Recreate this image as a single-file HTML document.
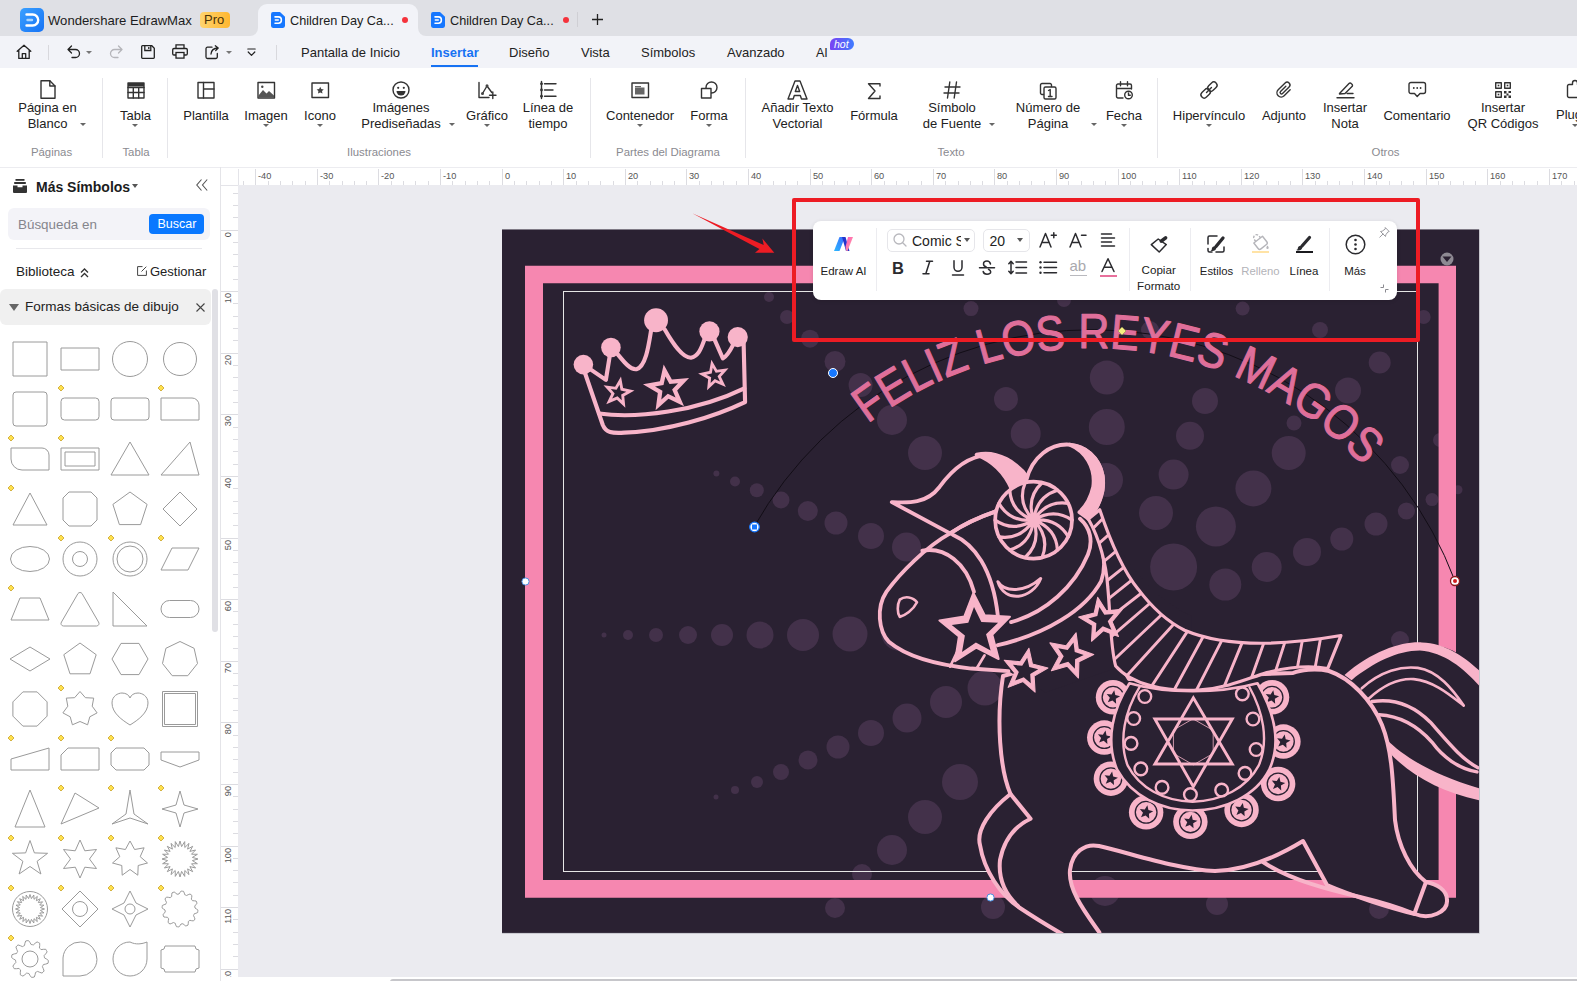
<!DOCTYPE html>
<html>
<head>
<meta charset="utf-8">
<title>EdrawMax</title>
<style>
*{box-sizing:border-box;margin:0;padding:0}
html,body{width:1577px;height:981px;overflow:hidden;background:#ebebf0;font-family:"Liberation Sans",sans-serif;color:#1f1f24;font-size:13px}
.abs{position:absolute}
#titlebar{position:absolute;left:0;top:0;width:1577px;height:36px;background:#dfe0e5}
#menubar{position:absolute;left:0;top:36px;width:1577px;height:32px;background:#f2f3f8}
#ribbon{position:absolute;left:0;top:68px;width:1577px;height:99px;background:#fff}
#left{position:absolute;z-index:2;left:0;top:167px;width:221px;height:814px;background:#fff;border-right:1px solid #e4e4e8;box-shadow:inset 0 1px 0 #ececf0}
#hruler{position:absolute;left:220px;top:167px;width:1357px;height:18px;background:#fff;border-top:1px solid #ececf0}
#vruler{position:absolute;left:220px;top:185px;width:18px;height:796px;background:#fff}
#canvas{position:absolute;left:238px;top:185px;width:1339px;height:796px;background:#ebebf0}
.t{position:absolute;white-space:nowrap;line-height:16px}
.c{transform:translateX(-50%);text-align:center}
.ico{position:absolute;overflow:visible}
svg{overflow:visible}
.sep{position:absolute;width:1px;background:#e6e6ea}
.glab{position:absolute;white-space:nowrap;color:#8a8a90;font-size:11.400px;line-height:14px;transform:translateX(-50%)}
.rl{position:absolute;white-space:nowrap;font-size:13px;line-height:16px;transform:translateX(-50%);text-align:center;color:#222}
.dd{position:absolute;width:0;height:0;border-left:3.5px solid transparent;border-right:3.5px solid transparent;border-top:4px solid #555}
</style>
</head>
<body>
<!--TITLEBAR-->
<div id="titlebar">
<svg class="ico" style="left:20px;top:8px" width="24" height="24" viewBox="0 0 24 24"><defs><linearGradient id="lg1" x1="0" y1="0" x2="1" y2="1"><stop offset="0" stop-color="#3aa0ff"/><stop offset="1" stop-color="#1673f5"/></linearGradient></defs><rect x="0" y="0" width="24" height="24" rx="5" fill="url(#lg1)"/><path d="M6.5 6.5h6.2a5.5 5.5 0 0 1 0 11H6.5" fill="none" stroke="#fff" stroke-width="2.4" stroke-linecap="round"/><path d="M7.500 12h4.500" stroke="#a9d5ff" stroke-width="2.400" stroke-linecap="round"/></svg>
<div class="t" style="left:48px;top:13px;font-size:13.1px;color:#1c1c20">Wondershare EdrawMax</div>
<div class="abs" style="left:200px;top:12px;width:30px;height:16px;border-radius:4px;background:linear-gradient(90deg,#ffd46e,#ffb730)"></div>
<div class="t" style="left:204px;top:12px;font-size:13px;color:#4a3208">Pro</div>
<div class="abs" style="left:258px;top:4px;width:160px;height:32px;background:#f2f3f8;border-radius:9px 9px 0 0"></div>
<svg class="ico" style="left:250px;top:28px" width="8" height="8"><path d="M8 0v8H0a8 8 0 0 0 8-8z" fill="#f2f3f8"/></svg>
<svg class="ico" style="left:418px;top:28px" width="8" height="8"><path d="M0 0v8h8a8 8 0 0 1-8-8z" fill="#f2f3f8"/></svg>
<svg class="ico" style="left:271px;top:12px" width="14" height="16" viewBox="0 0 14 15" preserveAspectRatio="none"><path d="M0 2a2 2 0 0 1 2-2h7l5 4.5V13a2 2 0 0 1-2 2H2a2 2 0 0 1-2-2z" fill="#1677ff"/><path d="M4 4.6h3.4a3 3 0 0 1 0 6H4" fill="none" stroke="#fff" stroke-width="1.5" stroke-linecap="round"/><path d="M4.3 7.6h3" stroke="#fff" stroke-width="1.4" stroke-linecap="round"/></svg>
<div class="t" style="left:290px;top:13px;font-size:12.7px;color:#1c1c20">Children Day Ca...</div>
<div class="abs" style="left:402px;top:17px;width:6px;height:6px;border-radius:50%;background:#f5323c"></div>
<svg class="ico" style="left:431px;top:12px" width="14" height="16" viewBox="0 0 14 15" preserveAspectRatio="none"><path d="M0 2a2 2 0 0 1 2-2h7l5 4.5V13a2 2 0 0 1-2 2H2a2 2 0 0 1-2-2z" fill="#1677ff"/><path d="M4 4.6h3.4a3 3 0 0 1 0 6H4" fill="none" stroke="#fff" stroke-width="1.5" stroke-linecap="round"/><path d="M4.3 7.6h3" stroke="#fff" stroke-width="1.4" stroke-linecap="round"/></svg>
<div class="t" style="left:450px;top:13px;font-size:12.7px;color:#1c1c20">Children Day Ca...</div>
<div class="abs" style="left:563px;top:17px;width:6px;height:6px;border-radius:50%;background:#f5323c"></div>
<div class="abs" style="left:577px;top:12px;width:1px;height:15px;background:#cfcfd4"></div>
<svg class="ico" style="left:592px;top:14px" width="11" height="11"><path d="M5.5 0v11M0 5.5h11" stroke="#222" stroke-width="1.3"/></svg>
</div>
<!--MENUBAR-->
<div id="menubar">
<svg class="ico" style="left:16px;top:8px" width="16" height="16" viewBox="0 0 16 16"><path d="M1.2 7.2L8 1.3l6.8 5.9M2.8 6.2v8.2h10.4V6.2M6.3 14.4V9.6h3.4v4.8" fill="none" stroke="#222" stroke-width="1.3" stroke-linejoin="round" stroke-linecap="round"/></svg>
<div class="abs" style="left:48px;top:9px;width:1px;height:15px;background:#d8d8dd"></div>
<svg class="ico" style="left:67px;top:9px" width="14" height="14" viewBox="0 0 14 14"><path d="M4.5 1L1 4.5 4.5 8M1 4.5h7.5a4 4 0 0 1 0 8H5" fill="none" stroke="#222" stroke-width="1.3" stroke-linecap="round" stroke-linejoin="round"/></svg>
<div class="dd" style="left:86px;top:15px;border-top-color:#777;border-width:3px 3px 0 3px"></div>
<svg class="ico" style="left:109px;top:9px" width="14" height="14" viewBox="0 0 14 14"><path d="M9.5 1L13 4.5 9.5 8M13 4.5H5.5a4 4 0 0 0 0 8H9" fill="none" stroke="#b5b5ba" stroke-width="1.3" stroke-linecap="round" stroke-linejoin="round"/></svg>
<svg class="ico" style="left:141px;top:9px" width="14" height="14" viewBox="0 0 14 14"><path d="M1.5.7h9.3l2.5 2.5v9.3a.8.8 0 0 1-.8.8h-11a.8.8 0 0 1-.8-.8V1.5a.8.8 0 0 1 .8-.8z" fill="none" stroke="#222" stroke-width="1.3"/><path d="M3.8.8v4.7h6V.8M7.8 2v2" fill="none" stroke="#222" stroke-width="1.3"/></svg>
<svg class="ico" style="left:172px;top:8px" width="16" height="15" viewBox="0 0 16 15"><path d="M4 4.5V.8h8v3.7M4 11H2a1.3 1.3 0 0 1-1.3-1.3V5.8A1.3 1.3 0 0 1 2 4.5h12a1.3 1.3 0 0 1 1.3 1.3v3.9A1.3 1.3 0 0 1 14 11h-2" fill="none" stroke="#222" stroke-width="1.3"/><rect x="4" y="8.5" width="8" height="5.6" fill="none" stroke="#222" stroke-width="1.3"/></svg>
<svg class="ico" style="left:205px;top:8.500px" width="15" height="15" viewBox="0 0 15 15"><path d="M7 2.2H2.5A1.5 1.5 0 0 0 1 3.7v8.3a1.5 1.5 0 0 0 1.500 1.5h8.3a1.5 1.5 0 0 0 1.5-1.5V8.5" fill="none" stroke="#222" stroke-width="1.3" stroke-linecap="round"/><path d="M6 9c.3-3.5 2.500-5.800 7-6M10.300 .8L13.200 3 10.700 5.600" fill="none" stroke="#222" stroke-width="1.300" stroke-linecap="round" stroke-linejoin="round"/></svg>
<div class="dd" style="left:226px;top:15px;border-top-color:#777;border-width:3px 3px 0 3px"></div>
<svg class="ico" style="left:247px;top:12px" width="9" height="9" viewBox="0 0 9 9"><path d="M.8 1h7.400M1.200 4l3.300 3.400L7.800 4" fill="none" stroke="#222" stroke-width="1.200" stroke-linecap="round" stroke-linejoin="round"/></svg>
<div class="abs" style="left:276px;top:9px;width:1px;height:15px;background:#d8d8dd"></div>
<div class="t" style="left:301px;top:9px;font-size:13px;color:#222">Pantalla de Inicio</div>
<div class="t" style="left:431px;top:9px;font-size:13px;font-weight:700;color:#1672f3">Insertar</div>
<div class="abs" style="left:431px;top:29px;width:47px;height:2px;background:#1672f3"></div>
<div class="t" style="left:509px;top:9px;font-size:13px;color:#222">Diseño</div>
<div class="t" style="left:581px;top:9px;font-size:13px;color:#222">Vista</div>
<div class="t" style="left:641px;top:9px;font-size:13px;color:#222">Símbolos</div>
<div class="t" style="left:727px;top:9px;font-size:13px;color:#222">Avanzado</div>
<div class="t" style="left:816px;top:9px;font-size:12.5px;color:#222">AI</div>
<div class="abs" style="left:830px;top:2px;width:24px;height:12px;border-radius:6px 6px 6px 1px;background:linear-gradient(90deg,#7b42f3,#3f7cff)"></div>
<div class="t" style="left:834px;top:1px;font-size:10.500px;font-style:italic;color:#fff;line-height:14px">hot</div>
</div>
<!--RIBBON-->
<div id="ribbon">
<svg class="ico" style="left:38.5px;top:12px" width="18" height="19" viewBox="0 0 18 19"><path d="M2 .8h8.800L16 6v12.200H2z" fill="none" stroke="#333" stroke-width="1.4" stroke-linejoin="round" stroke-linecap="round" stroke-width="1.600"/><path d="M10.800 .8V6H16" fill="none" stroke="#333" stroke-width="1.4" stroke-linejoin="round" stroke-linecap="round" stroke-width="1.2" fill="none"/></svg>
<div class="rl" style="left:47.5px;top:31.6px">Página en<br>Blanco</div>
<div class="dd" style="left:79.5px;top:55px;border-width:3.500px 3.500px 0 3.500px;border-top-color:#666"></div>
<svg class="ico" style="left:126.5px;top:13px" width="18" height="18" viewBox="0 0 18 18"><rect x="1" y="2" width="16" height="15" fill="none" stroke="#333" stroke-width="1.4" stroke-linejoin="round" stroke-linecap="round" stroke-width="1.6"/><path d="M1 6.500h16M1 11.500h16M6.300 6.500v10.500M11.700 6.500v10.500" fill="none" stroke="#333" stroke-width="1.4" stroke-linejoin="round" stroke-linecap="round" stroke-width="1.500"/><rect x="1" y="2" width="16" height="3.500" fill="#333"/></svg>
<div class="rl" style="left:135.5px;top:39.5px">Tabla</div>
<div class="dd" style="left:132.0px;top:56px;border-width:3.500px 3.500px 0 3.500px;border-top-color:#666"></div>
<svg class="ico" style="left:197.0px;top:13px" width="18" height="18" viewBox="0 0 18 18"><rect x="1" y="1.500" width="16" height="15.500" fill="none" stroke="#333" stroke-width="1.4" stroke-linejoin="round" stroke-linecap="round" stroke-width="1.600"/><path d="M6.500 1.500v15.500M6.500 8h10.500" fill="none" stroke="#333" stroke-width="1.4" stroke-linejoin="round" stroke-linecap="round" stroke-width="1.600"/></svg>
<div class="rl" style="left:206px;top:39.5px">Plantilla</div>
<svg class="ico" style="left:257.0px;top:13px" width="18" height="18" viewBox="0 0 18 18"><rect x="1" y="1.500" width="16.500" height="15.500" fill="none" stroke="#333" stroke-width="1.4" stroke-linejoin="round" stroke-linecap="round" stroke-width="1.500"/><path d="M1.500 14.500l4.500-5.500 3.500 3.500 2.500-2.500 5 4.500v2h-16z" fill="#555"/><circle cx="5.300" cy="5.700" r="1.200" fill="#444"/></svg>
<div class="rl" style="left:266px;top:39.5px">Imagen</div>
<div class="dd" style="left:262.5px;top:56px;border-width:3.500px 3.500px 0 3.500px;border-top-color:#666"></div>
<svg class="ico" style="left:311.0px;top:13px" width="18" height="18" viewBox="0 0 18 18"><rect x="1" y="2" width="16.500" height="14.500" fill="none" stroke="#333" stroke-width="1.4" stroke-linejoin="round" stroke-linecap="round" stroke-width="1.500"/><path d="M9.200 5.800l1.100 2.300 2.500.3-1.800 1.700.500 2.500-2.300-1.200-2.200 1.200.400-2.500-1.800-1.700 2.500-.3z" fill="#444"/></svg>
<div class="rl" style="left:320px;top:39.5px">Icono</div>
<div class="dd" style="left:316.5px;top:56px;border-width:3.500px 3.500px 0 3.500px;border-top-color:#666"></div>
<svg class="ico" style="left:392.0px;top:13px" width="18" height="18" viewBox="0 0 18 18"><circle cx="9" cy="9" r="8" fill="none" stroke="#333" stroke-width="1.4" stroke-linejoin="round" stroke-linecap="round" stroke-width="1.400"/><circle cx="6.200" cy="6.800" r="1.100" fill="#333"/><circle cx="11.800" cy="6.800" r="1.100" fill="#333"/><path d="M4.500 10h9a4.500 4.500 0 0 1-9 0z" fill="#333"/></svg>
<div class="rl" style="left:401px;top:31.6px">Imágenes<br>Prediseñadas</div>
<div class="dd" style="left:448.5px;top:55px;border-width:3.500px 3.500px 0 3.500px;border-top-color:#666"></div>
<svg class="ico" style="left:478.0px;top:13px" width="18" height="18" viewBox="0 0 18 18"><path d="M1 1.500V16.500h10" fill="none" stroke="#333" stroke-width="1.4" stroke-linejoin="round" stroke-linecap="round" stroke-width="1.300" stroke="#555"/><path d="M4.500 12.500L9 5l4.800 6.500" fill="none" stroke="#333" stroke-width="1.4" stroke-linejoin="round" stroke-linecap="round" stroke-width="1.200" stroke="#555"/><circle cx="4.500" cy="12.500" r="1.500" fill="#444"/><circle cx="9" cy="4.800" r="1.500" fill="#444"/><path d="M14.800 11v6.500M11.500 14.200h6.500" fill="none" stroke="#333" stroke-width="1.4" stroke-linejoin="round" stroke-linecap="round" stroke-width="1.600"/></svg>
<div class="rl" style="left:487px;top:39.5px">Gráfico</div>
<div class="dd" style="left:483.5px;top:56px;border-width:3.500px 3.500px 0 3.500px;border-top-color:#666"></div>
<svg class="ico" style="left:539.0px;top:13px" width="18" height="18" viewBox="0 0 18 18"><path d="M2.500 .5v17" fill="none" stroke="#333" stroke-width="1.4" stroke-linejoin="round" stroke-linecap="round" stroke-width="1.300"/><path d="M5.500 2.800h11.500M5.500 9h8.500M5.500 15.200h11.500" fill="none" stroke="#333" stroke-width="1.4" stroke-linejoin="round" stroke-linecap="round" stroke-width="1.600" stroke-linecap="butt"/><circle cx="2.500" cy="2.800" r="1.400" fill="#333"/><circle cx="2.500" cy="9" r="1.400" fill="#333"/><circle cx="2.500" cy="15.200" r="1.400" fill="#333"/></svg>
<div class="rl" style="left:548px;top:31.6px">Línea de<br>tiempo</div>
<svg class="ico" style="left:631.0px;top:13px" width="18" height="18" viewBox="0 0 18 18"><rect x="1" y="2" width="16.500" height="14.500" fill="none" stroke="#333" stroke-width="1.4" stroke-linejoin="round" stroke-linecap="round" stroke-width="1.500"/><rect x="4" y="6.500" width="9.500" height="7" fill="#666"/><rect x="4" y="5" width="6" height="1.200" fill="#666"/></svg>
<div class="rl" style="left:640px;top:39.5px">Contenedor</div>
<div class="dd" style="left:636.5px;top:56px;border-width:3.500px 3.500px 0 3.500px;border-top-color:#666"></div>
<svg class="ico" style="left:700.0px;top:13px" width="18" height="18" viewBox="0 0 18 18"><circle cx="11.500" cy="6.500" r="5.500" fill="none" stroke="#333" stroke-width="1.4" stroke-linejoin="round" stroke-linecap="round" stroke-width="1.500"/><rect x="1.500" y="7.500" width="9.500" height="9.500" fill="#fff"  stroke="#333" stroke-width="1.4" stroke-linejoin="round" stroke-linecap="round" stroke-width="1.500"/></svg>
<div class="rl" style="left:709px;top:39.5px">Forma</div>
<div class="dd" style="left:705.5px;top:56px;border-width:3.500px 3.500px 0 3.500px;border-top-color:#666"></div>
<svg class="ico" style="left:787.0px;top:12px" width="21" height="20" viewBox="0 0 21 20"><path d="M1 19L8 1h5l7 18h-5.500l-1.200-3.500h-6L6.200 19z" fill="none" stroke="#333" stroke-width="1.4" stroke-linejoin="round" stroke-linecap="round" stroke-width="1.400"/><path d="M8.300 11.500l2.200-6 2.200 6z" fill="none" stroke="#333" stroke-width="1.4" stroke-linejoin="round" stroke-linecap="round" stroke-width="1.400"/></svg>
<div class="rl" style="left:797.5px;top:31.6px">Añadir Texto<br>Vectorial</div>
<svg class="ico" style="left:866.0px;top:14px" width="16" height="18" viewBox="0 0 16 18"><path d="M14 4V1.800H2.500L9 9l-6.500 7.500H14V14" fill="none" stroke="#333" stroke-width="1.4" stroke-linejoin="round" stroke-linecap="round" stroke-width="1.700" stroke-linejoin="miter"/></svg>
<div class="rl" style="left:874px;top:39.5px">Fórmula</div>
<svg class="ico" style="left:943.0px;top:13px" width="18" height="18" viewBox="0 0 18 18"><path d="M6.800 1L4.500 17M13.500 1l-2.300 16M2 6h15M1 12h15" fill="none" stroke="#333" stroke-width="1.4" stroke-linejoin="round" stroke-linecap="round" stroke-width="1.700" stroke-linecap="butt"/></svg>
<div class="rl" style="left:952px;top:31.6px">Símbolo<br>de Fuente</div>
<div class="dd" style="left:988.5px;top:55px;border-width:3.500px 3.500px 0 3.500px;border-top-color:#666"></div>
<svg class="ico" style="left:1039.0px;top:14px" width="18" height="18" viewBox="0 0 18 18"><path d="M4.500 12.500H3a1.500 1.500 0 0 1-1.500-1.500V3A1.500 1.500 0 0 1 3 1.500h8A1.500 1.500 0 0 1 12.500 3v1.500" fill="none" stroke="#333" stroke-width="1.4" stroke-linejoin="round" stroke-linecap="round" stroke="#666" stroke-width="1.300"/><rect x="5" y="5" width="12" height="12" rx="1.500" fill="none" stroke="#333" stroke-width="1.4" stroke-linejoin="round" stroke-linecap="round" stroke="#555" stroke-width="1.300"/><path d="M9.500 8.500l1.700-1v7M9.500 14.500h3.500" fill="none" stroke="#333" stroke-width="1.4" stroke-linejoin="round" stroke-linecap="round" stroke-width="1.300" stroke-linecap="butt" stroke-linejoin="miter"/></svg>
<div class="rl" style="left:1048px;top:31.6px">Número de<br>Página</div>
<div class="dd" style="left:1090.5px;top:55px;border-width:3.500px 3.500px 0 3.500px;border-top-color:#666"></div>
<svg class="ico" style="left:1115.0px;top:13px" width="18" height="18" viewBox="0 0 18 18"><path d="M8 17H3a1.500 1.500 0 0 1-1.500-1.500V4.500A1.500 1.500 0 0 1 3 3h12a1.500 1.500 0 0 1 1.500 1.500V8M1.500 7.500h15M5.500 .8v4M12.500 .8v4" fill="none" stroke="#333" stroke-width="1.4" stroke-linejoin="round" stroke-linecap="round" stroke="#555" stroke-width="1.300"/><circle cx="13.500" cy="14" r="3.800" fill="none" stroke="#333" stroke-width="1.4" stroke-linejoin="round" stroke-linecap="round" stroke-width="1.400"/><path d="M13.500 12v2.200h1.800" fill="none" stroke="#333" stroke-width="1.4" stroke-linejoin="round" stroke-linecap="round" stroke-width="1.200"/></svg>
<div class="rl" style="left:1124px;top:39.5px">Fecha</div>
<div class="dd" style="left:1120.5px;top:56px;border-width:3.500px 3.500px 0 3.500px;border-top-color:#666"></div>
<svg class="ico" style="left:1200.0px;top:13px" width="18" height="18" viewBox="0 0 18 18"><g transform="rotate(-45 9 9)"><rect x="-1" y="5.800" width="10.500" height="6.400" rx="3.200" fill="none" stroke="#333" stroke-width="1.4" stroke-linejoin="round" stroke-linecap="round" stroke-width="1.400"/><rect x="8.500" y="5.800" width="10.500" height="6.400" rx="3.200" fill="none" stroke="#333" stroke-width="1.4" stroke-linejoin="round" stroke-linecap="round" stroke-width="1.400"/><path d="M5.500 9h7" fill="none" stroke="#333" stroke-width="1.4" stroke-linejoin="round" stroke-linecap="round" stroke-width="1.400"/></g></svg>
<div class="rl" style="left:1209px;top:39.5px">Hipervínculo</div>
<div class="dd" style="left:1205.5px;top:56px;border-width:3.500px 3.500px 0 3.500px;border-top-color:#666"></div>
<svg class="ico" style="left:1275.0px;top:13px" width="18" height="18" viewBox="0 0 18 18"><g transform="rotate(45 9 9)"><path d="M13.200 4.500v8.500a4.200 4.200 0 0 1-8.400 0V3.200a2.800 2.800 0 0 1 5.600 0v9.300a1.400 1.400 0 0 1-2.800 0V5" fill="none" stroke="#333" stroke-width="1.4" stroke-linejoin="round" stroke-linecap="round" stroke-width="1.400"/></g></svg>
<div class="rl" style="left:1284px;top:39.5px">Adjunto</div>
<svg class="ico" style="left:1336.0px;top:13px" width="18" height="18" viewBox="0 0 18 18"><path d="M3.500 12.500L13 2.500a1.500 1.500 0 0 1 2.200 0l.8.800a1.500 1.500 0 0 1 0 2.200l-7 7-5.500.500z" fill="none" stroke="#333" stroke-width="1.4" stroke-linejoin="round" stroke-linecap="round" stroke-width="1.400"/><path d="M11 12.500h6" fill="none" stroke="#333" stroke-width="1.4" stroke-linejoin="round" stroke-linecap="round" stroke-width="1.500"/><path d="M1 16.800h17" fill="none" stroke="#333" stroke-width="1.4" stroke-linejoin="round" stroke-linecap="round" stroke-width="1.500" stroke-linecap="butt"/></svg>
<div class="rl" style="left:1345px;top:31.6px">Insertar<br>Nota</div>
<svg class="ico" style="left:1408.0px;top:13px" width="18" height="18" viewBox="0 0 18 18"><path d="M3 1.500h12.500a2 2 0 0 1 2 2v7a2 2 0 0 1-2 2h-3.500l-2.800 3-2.700-3H3a2 2 0 0 1-2-2v-7a2 2 0 0 1 2-2z" fill="none" stroke="#333" stroke-width="1.4" stroke-linejoin="round" stroke-linecap="round" stroke-width="1.400"/><circle cx="5.800" cy="7" r=".9" fill="#333"/><circle cx="9.200" cy="7" r=".9" fill="#333"/><circle cx="12.600" cy="7" r=".9" fill="#333"/></svg>
<div class="rl" style="left:1417px;top:39.5px">Comentario</div>
<svg class="ico" style="left:1494.0px;top:13px" width="18" height="18" viewBox="0 0 18 18"><rect x="1.700" y="1.700" width="5.600" height="5.600" fill="none" stroke="#333" stroke-width="1.4" stroke-linejoin="round" stroke-linecap="round" stroke-width="1.400" stroke-linejoin="miter"/><rect x="10.700" y="1.700" width="5.600" height="5.600" fill="none" stroke="#333" stroke-width="1.4" stroke-linejoin="round" stroke-linecap="round" stroke-width="1.400" stroke-linejoin="miter"/><rect x="1.700" y="10.700" width="5.600" height="5.600" fill="none" stroke="#333" stroke-width="1.4" stroke-linejoin="round" stroke-linecap="round" stroke-width="1.400" stroke-linejoin="miter"/><rect x="3.700" y="3.700" width="1.600" height="1.600" fill="#333"/><rect x="12.700" y="3.700" width="1.600" height="1.600" fill="#333"/><rect x="3.700" y="12.700" width="1.600" height="1.600" fill="#333"/><path d="M10 10h2.500v2.500H10zM14.500 10H17v2h-2.500zM12.500 12.500h2v2h-2zM10 14.500h2.500V17H10zM14.500 14.500H17V17h-2.500z" fill="#333"/></svg>
<div class="rl" style="left:1503px;top:31.6px">Insertar<br>QR Códigos</div>
<svg class="ico" style="left:1566px;top:12px" width="18" height="18" viewBox="0 0 18 18"><path d="M12 17.500H3a1.500 1.500 0 0 1-1.500-1.500V6A1.500 1.500 0 0 1 3 4.500h3.500V3a2.500 2.500 0 0 1 5 0v1.500" fill="none" stroke="#333" stroke-width="1.4" stroke-linejoin="round" stroke-linecap="round" stroke-width="1.500"/></svg>
<div class="rl" style="left:1556px;top:39px;transform:none;text-align:left">Plug</div>
<div class="dd" style="left:1572px;top:56px;border-width:3.500px 3.500px 0 3.500px;border-top-color:#666"></div>
<div class="sep" style="left:102px;top:10px;height:80px"></div>
<div class="sep" style="left:167px;top:10px;height:80px"></div>
<div class="sep" style="left:589.5px;top:10px;height:80px"></div>
<div class="sep" style="left:744.5px;top:10px;height:80px"></div>
<div class="sep" style="left:1157px;top:10px;height:80px"></div>
<div class="glab" style="left:51.5px;top:77px">Páginas</div>
<div class="glab" style="left:136px;top:77px">Tabla</div>
<div class="glab" style="left:379px;top:77px">Ilustraciones</div>
<div class="glab" style="left:668px;top:77px">Partes del Diagrama</div>
<div class="glab" style="left:951px;top:77px">Texto</div>
<div class="glab" style="left:1385.5px;top:77px">Otros</div>
</div>
<!--LEFT-->
<div id="left">
<svg class="ico" style="left:13px;top:12px" width="14" height="14" viewBox="0 0 14 14"><rect x="2.500" y="0" width="9" height="1.800" fill="#333"/><rect x="1.200" y="3" width="11.600" height="2" fill="#333"/><path d="M0 6.500h4.500v1.700h5V6.500H14V13a1 1 0 0 1-1 1H1a1 1 0 0 1-1-1z" fill="#333"/></svg>
<div class="t" style="left:36px;top:12px;font-size:14px;font-weight:700;color:#1c1c20">Más Símbolos</div>
<div class="dd" style="left:131.500px;top:17px;border-width:4px 3.500px 0 3.500px;border-top-color:#555"></div>
<svg class="ico" style="left:196px;top:12px" width="12" height="12" viewBox="0 0 12 12"><path d="M5.500 .5L.8 6l4.700 5.500M11.200 .5L6.500 6l4.700 5.500" fill="none" stroke="#555" stroke-width="1.100"/></svg>
<div class="abs" style="left:8px;top:41px;width:202px;height:32px;border-radius:6px;background:#f3f3f8"></div>
<div class="t" style="left:18px;top:50px;font-size:13.400px;color:#85858c">Búsqueda en</div>
<div class="abs" style="left:149px;top:47px;width:55px;height:20px;border-radius:4px;background:#0a78ff"></div>
<div class="t" style="left:157.500px;top:49px;font-size:12.500px;color:#fff">Buscar</div>
<div class="abs" style="left:16px;top:81px;width:186px;height:1px;background:#e8e8ec"></div>
<div class="t" style="left:16px;top:97px;font-size:13.500px;color:#222">Biblioteca</div>
<svg class="ico" style="left:80px;top:101px" width="9" height="10" viewBox="0 0 9 10"><path d="M1 4.500l3.500-3.500L8 4.500M1 9l3.500-3.500L8 9" fill="none" stroke="#333" stroke-width="1.300"/></svg>
<svg class="ico" style="left:137px;top:99px" width="10" height="10" viewBox="0 0 10 10"><path d="M5.500 .6H.6v8.800h8.800V4.500" fill="none" stroke="#444" stroke-width="1"/><path d="M4.500 5.500L9.300 .7" stroke="#444" stroke-width="1"/></svg>
<div class="t" style="left:150px;top:97px;font-size:13px;color:#222">Gestionar</div>
<div class="abs" style="left:0;top:122px;width:211px;height:36px;border-radius:6px;background:#f0f0f0"></div>
<div class="abs" style="left:9px;top:137px;width:0;height:0;border-left:5px solid transparent;border-right:5px solid transparent;border-top:7px solid #666"></div>
<div class="t" style="left:25px;top:132px;font-size:13.500px;color:#222">Formas básicas de dibujo</div>
<svg class="ico" style="left:196px;top:136px" width="9" height="9" viewBox="0 0 9 9"><path d="M.5 .5l8 8M8.500 .5l-8 8" stroke="#444" stroke-width="1.100"/></svg>
<div class="abs" style="left:212px;top:122px;width:6px;height:343px;border-radius:3px;background:#e0e0e5"></div>
<svg class="ico" style="left:0;top:0" width="220" height="814" viewBox="0 167 220 814" fill="none" stroke="#9a9a9a" stroke-width="1">
<g transform="translate(30 359)"><path d="M-17 -17h34v34h-34z"/></g>
<g transform="translate(80 359)"><path d="M-19 -11h38v22h-38z"/></g>
<g transform="translate(130 359)"><circle r="17.500"/></g>
<g transform="translate(180 359)"><circle r="16.500"/></g>
<g transform="translate(30 409)"><rect x="-17" y="-17" width="34" height="34" rx="3"/></g>
<g transform="translate(80 409)"><rect x="-19" y="-11" width="38" height="22" rx="3.500"/></g>
<path d="M61 385l3 3l-3 3l-3 -3z" fill="#ffe14d" stroke="#c9a227" stroke-width=".8"/>
<g transform="translate(130 409)"><rect x="-19" y="-11" width="38" height="22" rx="3"/></g>
<g transform="translate(180 409)"><path d="M-19 -11h31a7 7 0 0 1 7 7v15h-38z"/></g>
<path d="M161 385l3 3l-3 3l-3 -3z" fill="#ffe14d" stroke="#c9a227" stroke-width=".8"/>
<g transform="translate(30 459)"><path d="M-19 -11h31a7 7 0 0 1 7 7v15h-27a11 11 0 0 1 -11 -11z"/></g>
<path d="M11 435l3 3l-3 3l-3 -3z" fill="#ffe14d" stroke="#c9a227" stroke-width=".8"/>
<g transform="translate(80 459)"><path d="M-19 -11h38v22h-38z"/><path d="M-15 -7h30v14h-30z"/></g>
<path d="M61 435l3 3l-3 3l-3 -3z" fill="#ffe14d" stroke="#c9a227" stroke-width=".8"/>
<g transform="translate(130 459)"><path d="M0 -17L19 16H-19z"/></g>
<g transform="translate(180 459)"><path d="M10 -17L19 16H-19z"/></g>
<g transform="translate(30 509)"><path d="M0 -16L17 16H-17z"/></g>
<path d="M11 485l3 3l-3 3l-3 -3z" fill="#ffe14d" stroke="#c9a227" stroke-width=".8"/>
<g transform="translate(80 509)"><path d="M-11 -17h22l6 6v22l-6 6h-22l-6-6v-22z"/></g>
<g transform="translate(130 509)"><path d="M0.0 -17.0L17.1 -4.6L10.6 15.6L-10.6 15.6L-17.1 -4.6z"/></g>
<g transform="translate(180 509)"><path d="M0 -17L17 0L0 17L-17 0z"/></g>
<g transform="translate(30 559)"><ellipse rx="19.500" ry="12.500"/></g>
<g transform="translate(80 559)"><circle r="17"/><circle r="7.500"/></g>
<path d="M61 535l3 3l-3 3l-3 -3z" fill="#ffe14d" stroke="#c9a227" stroke-width=".8"/>
<g transform="translate(130 559)"><circle r="17"/><circle r="13"/></g>
<path d="M111 535l3 3l-3 3l-3 -3z" fill="#ffe14d" stroke="#c9a227" stroke-width=".8"/>
<g transform="translate(180 559)"><path d="M-8 -11h27l-11 22h-27z"/></g>
<path d="M161 535l3 3l-3 3l-3 -3z" fill="#ffe14d" stroke="#c9a227" stroke-width=".8"/>
<g transform="translate(30 609)"><path d="M-10 -11h20l9 22h-38z"/></g>
<path d="M11 585l3 3l-3 3l-3 -3z" fill="#ffe14d" stroke="#c9a227" stroke-width=".8"/>
<g transform="translate(80 609)"><path d="M-2 -15.500a2.500 2.500 0 0 1 4 0L18.500 13a2.500 2.500 0 0 1 -2 4h-33a2.500 2.500 0 0 1 -2 -4z"/></g>
<g transform="translate(130 609)"><path d="M-17 -17L17 17H-17z"/></g>
<g transform="translate(180 609)"><rect x="-19" y="-8.500" width="38" height="17" rx="8.500"/></g>
<g transform="translate(30 659)"><path d="M0 -12L20 0L0 12L-20 0z"/></g>
<g transform="translate(80 659)"><path d="M0.0 -16.0L16.2 -4.3L10.0 14.8L-10.0 14.8L-16.2 -4.3z"/></g>
<g transform="translate(130 659)"><path d="M18.0 0.0L9.0 15.6L-9.0 15.6L-18.0 0.0L-9.0 -15.6L9.0 -15.6z"/></g>
<g transform="translate(180 659)"><path d="M0.0 -17.5L14.1 -10.7L17.5 4.5L7.8 16.7L-7.8 16.7L-17.5 4.5L-14.1 -10.7z"/></g>
<g transform="translate(30 709)"><path d="M17.1 7.1L7.1 17.1L-7.1 17.1L-17.1 7.1L-17.1 -7.1L-7.1 -17.1L7.1 -17.1L17.1 -7.1z"/></g>
<g transform="translate(80 709)"><path d="M0.0 -17.5L5.4 -11.3L13.7 -10.9L12.2 -2.8L17.1 3.9L9.8 7.8L7.6 15.8L0.0 12.5L-7.6 15.8L-9.8 7.8L-17.1 3.9L-12.2 -2.8L-13.7 -10.9L-5.4 -11.3z"/></g>
<path d="M61 685l3 3l-3 3l-3 -3z" fill="#ffe14d" stroke="#c9a227" stroke-width=".8"/>
<g transform="translate(130 709)"><path d="M0 16C-8 11 -18 4 -18 -6C-18 -13 -12 -16 -8 -16C-4 -16 -1 -14 0 -11C1 -14 4 -16 8 -16C12 -16 18 -13 18 -6C18 4 8 11 0 16z"/></g>
<g transform="translate(180 709)"><path d="M-17.500 -17.500h35v35h-35z"/><path d="M-15.500 -15.500h31v31h-31z"/></g>
<g transform="translate(30 759)"><path d="M-19 0L19 -11V11H-19z"/></g>
<path d="M11 735l3 3l-3 3l-3 -3z" fill="#ffe14d" stroke="#c9a227" stroke-width=".8"/>
<g transform="translate(80 759)"><path d="M-12 -11H19V11H-19V-4z"/></g>
<path d="M61 735l3 3l-3 3l-3 -3z" fill="#ffe14d" stroke="#c9a227" stroke-width=".8"/>
<g transform="translate(130 759)"><path d="M-14 -11h28l5 5v12l-5 5h-28l-5-5v-12z"/></g>
<path d="M111 735l3 3l-3 3l-3 -3z" fill="#ffe14d" stroke="#c9a227" stroke-width=".8"/>
<g transform="translate(180 759)"><path d="M-19 -7h38v8L0 8L-19 1z"/></g>
<g transform="translate(30 809)"><path d="M0 -19L15 18H-15z"/></g>
<g transform="translate(80 809)"><path d="M-5 -16L19 -1L-19 15z"/></g>
<path d="M61 785l3 3l-3 3l-3 -3z" fill="#ffe14d" stroke="#c9a227" stroke-width=".8"/>
<g transform="translate(130 809)"><path d="M0 -19L4 5L18 15L0 9L-18 15L-4 5z"/></g>
<path d="M111 785l3 3l-3 3l-3 -3z" fill="#ffe14d" stroke="#c9a227" stroke-width=".8"/>
<g transform="translate(180 809)"><path d="M0 -18L4 -4L18 0L4 4L0 18L-4 4L-18 0L-4 -4z"/></g>
<path d="M161 785l3 3l-3 3l-3 -3z" fill="#ffe14d" stroke="#c9a227" stroke-width=".8"/>
<g transform="translate(30 859)"><path d="M0.0 -18.5L4.4 -6.1L17.6 -5.7L7.1 2.3L10.9 15.0L0.0 7.5L-10.9 15.0L-7.1 2.3L-17.6 -5.7L-4.4 -6.1z"/></g>
<path d="M11 835l3 3l-3 3l-3 -3z" fill="#ffe14d" stroke="#c9a227" stroke-width=".8"/>
<g transform="translate(80 859)"><path d="M0.0 -19.0L4.8 -8.2L16.5 -9.5L9.5 0.0L16.5 9.5L4.8 8.2L0.0 19.0L-4.7 8.2L-16.5 9.5L-9.5 0.0L-16.5 -9.5L-4.8 -8.2z"/></g>
<path d="M61 835l3 3l-3 3l-3 -3z" fill="#ffe14d" stroke="#c9a227" stroke-width=".8"/>
<g transform="translate(130 859)"><path d="M0.0 -18.0L4.6 -9.5L14.1 -11.2L10.2 -2.3L17.5 4.0L8.2 6.5L7.8 16.2L0.0 10.5L-7.8 16.2L-8.2 6.5L-17.5 4.0L-10.2 -2.3L-14.1 -11.2L-4.6 -9.5z"/></g>
<path d="M111 835l3 3l-3 3l-3 -3z" fill="#ffe14d" stroke="#c9a227" stroke-width=".8"/>
<g transform="translate(180 859)"><path d="M0.0 -18.0L1.6 -12.4L4.7 -17.4L4.8 -11.5L9.0 -15.6L7.6 -9.9L12.7 -12.7L9.9 -7.6L15.6 -9.0L11.5 -4.8L17.4 -4.7L12.4 -1.6L18.0 0.0L12.4 1.6L17.4 4.7L11.5 4.8L15.6 9.0L9.9 7.6L12.7 12.7L7.6 9.9L9.0 15.6L4.8 11.5L4.7 17.4L1.6 12.4L0.0 18.0L-1.6 12.4L-4.7 17.4L-4.8 11.5L-9.0 15.6L-7.6 9.9L-12.7 12.7L-9.9 7.6L-15.6 9.0L-11.5 4.8L-17.4 4.7L-12.4 1.6L-18.0 0.0L-12.4 -1.6L-17.4 -4.7L-11.5 -4.8L-15.6 -9.0L-9.9 -7.6L-12.7 -12.7L-7.6 -9.9L-9.0 -15.6L-4.8 -11.5L-4.7 -17.4L-1.6 -12.4z"/></g>
<path d="M161 835l3 3l-3 3l-3 -3z" fill="#ffe14d" stroke="#c9a227" stroke-width=".8"/>
<g transform="translate(30 909)"><circle r="17.500"/><path d="M0.0 -14.5L1.4 -10.4L3.8 -14.0L4.0 -9.7L7.3 -12.6L6.4 -8.3L10.3 -10.3L8.3 -6.4L12.6 -7.2L9.7 -4.0L14.0 -3.8L10.4 -1.4L14.5 0.0L10.4 1.4L14.0 3.8L9.7 4.0L12.6 7.2L8.3 6.4L10.3 10.3L6.4 8.3L7.3 12.6L4.0 9.7L3.8 14.0L1.4 10.4L0.0 14.5L-1.4 10.4L-3.8 14.0L-4.0 9.7L-7.2 12.6L-6.4 8.3L-10.3 10.3L-8.3 6.4L-12.6 7.2L-9.7 4.0L-14.0 3.8L-10.4 1.4L-14.5 0.0L-10.4 -1.4L-14.0 -3.8L-9.7 -4.0L-12.6 -7.3L-8.3 -6.4L-10.3 -10.3L-6.4 -8.3L-7.3 -12.6L-4.0 -9.7L-3.8 -14.0L-1.4 -10.4z"/></g>
<path d="M11 885l3 3l-3 3l-3 -3z" fill="#ffe14d" stroke="#c9a227" stroke-width=".8"/>
<g transform="translate(80 909)"><path d="M0 -18L18 0L0 18L-18 0z"/><circle r="7.500"/></g>
<path d="M61 885l3 3l-3 3l-3 -3z" fill="#ffe14d" stroke="#c9a227" stroke-width=".8"/>
<g transform="translate(130 909)"><path d="M0 -18L6 -6L18 0L6 6L0 18L-6 6L-18 0L-6 -6z"/><circle r="5"/></g>
<path d="M111 885l3 3l-3 3l-3 -3z" fill="#ffe14d" stroke="#c9a227" stroke-width=".8"/>
<g transform="translate(180 909)"><path d="M16.5 0.0L18.0 1.2L17.8 2.3L17.7 3.5L15.9 4.3L14.2 4.8L13.9 5.7L13.5 6.6L14.3 8.2L15.0 10.0L14.3 11.0L13.5 11.9L11.7 11.7L9.9 11.3L9.1 11.9L8.3 12.5L8.3 14.3L8.0 16.1L6.9 16.6L5.8 17.0L4.3 15.9L2.9 14.7L2.0 14.9L1.0 15.0L0.0 16.5L-1.2 18.0L-2.3 17.8L-3.5 17.7L-4.3 15.9L-4.8 14.2L-5.7 13.9L-6.6 13.5L-8.2 14.3L-10.0 15.0L-11.0 14.3L-11.9 13.5L-11.7 11.7L-11.3 9.9L-11.9 9.1L-12.5 8.3L-14.3 8.2L-16.1 8.0L-16.6 6.9L-17.0 5.8L-15.9 4.3L-14.7 2.9L-14.9 2.0L-15.0 1.0L-16.5 0.0L-18.0 -1.2L-17.8 -2.3L-17.7 -3.5L-15.9 -4.3L-14.2 -4.8L-13.9 -5.7L-13.5 -6.6L-14.3 -8.2L-15.0 -10.0L-14.3 -11.0L-13.5 -11.9L-11.7 -11.7L-9.9 -11.3L-9.1 -11.9L-8.3 -12.5L-8.3 -14.3L-8.0 -16.1L-6.9 -16.6L-5.8 -17.0L-4.3 -15.9L-2.9 -14.7L-2.0 -14.9L-1.0 -15.0L-0.0 -16.5L1.2 -18.0L2.3 -17.8L3.5 -17.7L4.3 -15.9L4.8 -14.2L5.7 -13.9L6.6 -13.5L8.2 -14.3L10.0 -15.0L11.0 -14.3L11.9 -13.5L11.7 -11.7L11.3 -9.9L11.9 -9.1L12.5 -8.3L14.3 -8.2L16.1 -8.0L16.6 -6.9L17.0 -5.8L15.9 -4.3L14.7 -2.9L14.9 -2.0L15.0 -1.0z"/></g>
<path d="M161 885l3 3l-3 3l-3 -3z" fill="#ffe14d" stroke="#c9a227" stroke-width=".8"/>
<g transform="translate(30 959)"><path d="M16.5 0.0L18.4 1.5L18.3 2.9L18.0 4.3L15.7 5.1L13.4 5.5L12.9 6.6L12.4 7.6L13.3 9.7L14.1 12.0L13.1 13.1L12.0 14.1L9.7 13.3L7.6 12.4L6.6 12.9L5.5 13.4L5.1 15.7L4.3 18.0L2.9 18.3L1.5 18.4L0.0 16.5L-1.1 14.5L-2.3 14.3L-3.4 14.1L-5.1 15.7L-7.1 17.1L-8.4 16.5L-9.7 15.8L-9.7 13.3L-9.4 11.0L-10.3 10.3L-11.0 9.4L-13.3 9.7L-15.8 9.7L-16.5 8.4L-17.1 7.1L-15.7 5.1L-14.1 3.4L-14.3 2.3L-14.5 1.1L-16.5 0.0L-18.4 -1.5L-18.3 -2.9L-18.0 -4.3L-15.7 -5.1L-13.4 -5.5L-12.9 -6.6L-12.4 -7.6L-13.3 -9.7L-14.1 -12.0L-13.1 -13.1L-12.0 -14.1L-9.7 -13.3L-7.6 -12.4L-6.6 -12.9L-5.5 -13.4L-5.1 -15.7L-4.3 -18.0L-2.9 -18.3L-1.5 -18.4L-0.0 -16.5L1.1 -14.5L2.3 -14.3L3.4 -14.1L5.1 -15.7L7.1 -17.1L8.4 -16.5L9.7 -15.8L9.7 -13.3L9.4 -11.0L10.3 -10.3L11.0 -9.4L13.3 -9.7L15.8 -9.7L16.5 -8.4L17.1 -7.1L15.7 -5.1L14.1 -3.4L14.3 -2.3L14.5 -1.1z"/><circle r="8"/></g>
<path d="M11 935l3 3l-3 3l-3 -3z" fill="#ffe14d" stroke="#c9a227" stroke-width=".8"/>
<g transform="translate(80 959)"><path d="M-17 17V-1A17 17 0 1 1 0 17z"/></g>
<g transform="translate(130 959)"><path d="M17 -17V0A17 17 0 1 1 0 -17C6 -14 12 -15 17 -17z"/></g>
<g transform="translate(180 959)"><path d="M-15 -13h30a4 4 0 0 0 4 4v18a4 4 0 0 0 -4 4h-30a4 4 0 0 0 -4 -4v-18a4 4 0 0 0 4 -4z"/></g>
</svg>
</div>
<!--RULERS-->
<div id="hruler">
<svg class="ico" style="left:0;top:0" width="1357" height="18" viewBox="220 167 1357 18">
<path d="M243.5 180V185M255.5 168V185M268.5 180V185M280.5 180V185M292.5 180V185M305.5 180V185M317.5 168V185M329.5 180V185M342.5 180V185M354.5 180V185M366.5 180V185M378.5 168V185M391.5 180V185M403.5 180V185M415.5 180V185M428.5 180V185M440.5 168V185M452.5 180V185M465.5 180V185M477.5 180V185M489.5 180V185M502.5 168V185M514.5 180V185M526.5 180V185M539.5 180V185M551.5 180V185M563.5 168V185M576.5 180V185M588.5 180V185M600.5 180V185M613.5 180V185M625.5 168V185M637.5 180V185M650.5 180V185M662.5 180V185M674.5 180V185M686.5 168V185M699.5 180V185M711.5 180V185M723.5 180V185M736.5 180V185M748.5 168V185M760.5 180V185M773.5 180V185M785.5 180V185M797.5 180V185M810.5 168V185M822.5 180V185M834.5 180V185M847.5 180V185M859.5 180V185M871.5 168V185M884.5 180V185M896.5 180V185M908.5 180V185M921.5 180V185M933.5 168V185M945.5 180V185M958.5 180V185M970.5 180V185M982.5 180V185M994.5 168V185M1007.5 180V185M1019.5 180V185M1031.5 180V185M1044.5 180V185M1056.5 168V185M1068.5 180V185M1081.5 180V185M1093.5 180V185M1105.5 180V185M1118.5 168V185M1130.5 180V185M1142.5 180V185M1155.5 180V185M1167.5 180V185M1179.5 168V185M1192.5 180V185M1204.5 180V185M1216.5 180V185M1229.5 180V185M1241.5 168V185M1253.5 180V185M1266.5 180V185M1278.5 180V185M1290.5 180V185M1302.5 168V185M1315.5 180V185M1327.5 180V185M1339.5 180V185M1352.5 180V185M1364.5 168V185M1376.5 180V185M1389.5 180V185M1401.5 180V185M1413.5 180V185M1426.5 168V185M1438.5 180V185M1450.5 180V185M1463.5 180V185M1475.5 180V185M1487.5 168V185M1500.5 180V185M1512.5 180V185M1524.5 180V185M1537.5 180V185M1549.5 168V185M1561.5 180V185M1574.5 180V185" stroke="#dcdce1" stroke-width="1" fill="none"/><path d="M238.500 168V185.500H221" stroke="#e4e4e9" fill="none"/>
<g font-family="Liberation Sans" font-size="9.200" fill="#555"><text x="258.0" y="178">-40</text><text x="320.0" y="178">-30</text><text x="381.0" y="178">-20</text><text x="443.0" y="178">-10</text><text x="505.0" y="178">0</text><text x="566.0" y="178">10</text><text x="628.0" y="178">20</text><text x="689.0" y="178">30</text><text x="751.0" y="178">40</text><text x="813.0" y="178">50</text><text x="874.0" y="178">60</text><text x="936.0" y="178">70</text><text x="997.0" y="178">80</text><text x="1059.0" y="178">90</text><text x="1121.0" y="178">100</text><text x="1182.0" y="178">110</text><text x="1244.0" y="178">120</text><text x="1305.0" y="178">130</text><text x="1367.0" y="178">140</text><text x="1429.0" y="178">150</text><text x="1490.0" y="178">160</text><text x="1552.0" y="178">170</text></g>
</svg></div>
<div id="vruler">
<svg class="ico" style="left:0;top:0" width="18" height="796" viewBox="220 185 18 796">
<path d="M233 193.5H238M233 205.5H238M233 217.5H238M221 230.5H238M233 242.5H238M233 254.5H238M233 266.5H238M233 279.5H238M221 291.5H238M233 303.5H238M233 316.5H238M233 328.5H238M233 340.5H238M221 353.5H238M233 365.5H238M233 377.5H238M233 390.5H238M233 402.5H238M221 414.5H238M233 427.5H238M233 439.5H238M233 451.5H238M233 464.5H238M221 476.5H238M233 488.5H238M233 501.5H238M233 513.5H238M233 525.5H238M221 538.5H238M233 550.5H238M233 562.5H238M233 574.5H238M233 587.5H238M221 599.5H238M233 611.5H238M233 624.5H238M233 636.5H238M233 648.5H238M221 661.5H238M233 673.5H238M233 685.5H238M233 698.5H238M233 710.5H238M221 722.5H238M233 735.5H238M233 747.5H238M233 759.5H238M233 772.5H238M221 784.5H238M233 796.5H238M233 809.5H238M233 821.5H238M233 833.5H238M221 846.5H238M233 858.5H238M233 870.5H238M233 882.5H238M233 895.5H238M221 907.5H238M233 919.5H238M233 932.5H238M233 944.5H238M233 956.5H238M221 969.5H238" stroke="#dcdce1" stroke-width="1" fill="none"/><path d="M221 185.500H238" stroke="#e4e4e9" fill="none"/>
<g font-family="Liberation Sans" font-size="9.200" fill="#555"><text transform="translate(230.500 232.0) rotate(-90)" text-anchor="end">0</text><text transform="translate(230.500 293.0) rotate(-90)" text-anchor="end">10</text><text transform="translate(230.500 355.0) rotate(-90)" text-anchor="end">20</text><text transform="translate(230.500 416.0) rotate(-90)" text-anchor="end">30</text><text transform="translate(230.500 478.0) rotate(-90)" text-anchor="end">40</text><text transform="translate(230.500 540.0) rotate(-90)" text-anchor="end">50</text><text transform="translate(230.500 601.0) rotate(-90)" text-anchor="end">60</text><text transform="translate(230.500 663.0) rotate(-90)" text-anchor="end">70</text><text transform="translate(230.500 724.0) rotate(-90)" text-anchor="end">80</text><text transform="translate(230.500 786.0) rotate(-90)" text-anchor="end">90</text><text transform="translate(230.500 848.0) rotate(-90)" text-anchor="end">100</text><text transform="translate(230.500 909.0) rotate(-90)" text-anchor="end">110</text><text transform="translate(230.500 971.0) rotate(-90)" text-anchor="end">120</text></g>
</svg></div>
<!--CANVAS-->
<div id="canvas">
<svg class="ico" style="left:0;top:0" width="1339" height="796" viewBox="238 185 1339 796">
<defs><clipPath id="cardclip"><rect x="502" y="229.500" width="977" height="703.400"/></clipPath></defs>
<rect x="502" y="229.500" width="977.800" height="704.200" fill="#bdbdc4"/>
<rect x="502" y="229.500" width="977" height="703.400" fill="#2a2132"/>
<g clip-path="url(#cardclip)">
<g fill="#43314a"><circle cx="604" cy="635" r="2.5"/><circle cx="628" cy="635" r="5"/><circle cx="656" cy="635" r="7"/><circle cx="688" cy="635" r="9"/><circle cx="722" cy="635" r="11"/><circle cx="760" cy="635" r="13.5"/><circle cx="803" cy="635" r="16"/><circle cx="850" cy="634" r="17.5"/><circle cx="900" cy="632" r="19"/><circle cx="716" cy="797" r="2.5"/><circle cx="735" cy="790" r="4"/><circle cx="757" cy="782" r="6"/><circle cx="781" cy="772" r="8"/><circle cx="808" cy="760" r="9.5"/><circle cx="838" cy="747" r="11.5"/><circle cx="871" cy="733" r="13"/><circle cx="907" cy="718" r="14.5"/><circle cx="946" cy="702" r="16"/><circle cx="985" cy="688" r="17.5"/><circle cx="716.4" cy="473.4" r="3"/><circle cx="735" cy="481.5" r="5"/><circle cx="756.8" cy="490.3" r="7"/><circle cx="781" cy="500" r="8.5"/><circle cx="807.8" cy="511" r="10"/><circle cx="836" cy="523" r="11.5"/><circle cx="871" cy="536" r="13"/><circle cx="906.5" cy="547" r="14.5"/><circle cx="945" cy="558" r="16"/><circle cx="769" cy="297" r="5"/><circle cx="787" cy="317" r="7"/><circle cx="810" cy="338.7" r="9"/><circle cx="835" cy="361.5" r="10.5"/><circle cx="860.6" cy="385" r="12"/><circle cx="892" cy="420" r="15"/><circle cx="925" cy="453" r="17"/><circle cx="971" cy="308.6" r="7.5"/><circle cx="1242.6" cy="308.6" r="7"/><circle cx="1106.8" cy="377.6" r="17"/><circle cx="1006" cy="399" r="12"/><circle cx="1205" cy="401" r="13"/><circle cx="1348" cy="390.5" r="13"/><circle cx="1379.7" cy="362.5" r="11"/><circle cx="1025.7" cy="433.7" r="15"/><circle cx="1106.8" cy="427" r="18"/><circle cx="1190" cy="435.8" r="14"/><circle cx="1288.7" cy="453" r="17"/><circle cx="1173.6" cy="474.6" r="15"/><circle cx="1253.4" cy="488.4" r="18"/><circle cx="1156" cy="513" r="17"/><circle cx="1215.9" cy="526.4" r="20"/><circle cx="1376" cy="524" r="11.5"/><circle cx="1341.8" cy="539" r="11.5"/><circle cx="1307" cy="552" r="14"/><circle cx="1266.7" cy="567" r="15"/><circle cx="1173.6" cy="567" r="23.5"/><circle cx="1225.3" cy="584.6" r="16"/><circle cx="1406.4" cy="511" r="8.6"/><circle cx="1432" cy="499.6" r="6.5"/><circle cx="1458" cy="489.7" r="4.5"/><circle cx="1423.7" cy="317" r="7"/><circle cx="1294" cy="423" r="7.5"/><circle cx="1064" cy="300" r="7"/><circle cx="1150" cy="330" r="9"/><circle cx="1320" cy="330" r="8"/><circle cx="1440" cy="440" r="7"/><circle cx="1400" cy="465" r="9"/><circle cx="1106" cy="480" r="17"/><circle cx="1060" cy="560" r="16"/><circle cx="940" cy="600" r="14"/><circle cx="1040" cy="700" r="18"/><circle cx="960" cy="782" r="18"/><circle cx="925" cy="817" r="17"/><circle cx="892" cy="850" r="15"/><circle cx="862" cy="874" r="10"/><circle cx="835" cy="908" r="10"/><circle cx="1105" cy="891" r="15"/><circle cx="993" cy="907" r="12"/><circle cx="1217" cy="904" r="11"/><circle cx="1379" cy="909" r="10"/><circle cx="1400" cy="640" r="9"/><circle cx="1440" cy="700" r="9"/></g>
<path d="M525 265.700H1456V897.800H525zM543 283.200H1438.600V880H543z" fill="#f687b0" fill-rule="evenodd"/>
<rect x="563.500" y="291.500" width="854" height="580" fill="none" stroke="#e6e6e6" stroke-width="1"/>
<path id="arc" d="M754 527A388 388 0 0 1 1455 581" fill="none" stroke="#120d16" stroke-width="1"/>
<path id="arc2" d="M867.800 423.700A370 370 0 0 1 1363.500 466.600" fill="none"/>
<text font-family="Liberation Sans" font-size="49" fill="#df6f9a" stroke="#df6f9a" stroke-width="1.100" stroke-linejoin="round"><textPath href="#arc2" startOffset="0" textLength="545" lengthAdjust="spacingAndGlyphs">FELIZ LOS REYES MAGOS</textPath></text>
<g transform="translate(560 295) scale(0.15295)" fill="none" stroke="#f8b4c9" stroke-width="27" stroke-linejoin="round" stroke-linecap="round">
<path d="M160 500L280 850C300 900 340 905 420 900C700 890 1000 800 1210 700L1200 290"/>
<path d="M255 775C500 810 900 760 1205 610"/>
<path d="M190 480L300 555L325 400M375 385C420 440 460 490 500 485C560 470 580 330 595 235M685 225C740 320 800 410 855 410C910 400 925 340 945 290M1010 290L1065 415C1095 400 1115 360 1135 320"/>
<circle cx="153" cy="455" r="64" fill="#f8b4c9" stroke="none"/>
<circle cx="333" cy="343" r="64" fill="#f8b4c9" stroke="none"/>
<circle cx="628" cy="165" r="78" fill="#f8b4c9" stroke="none"/>
<circle cx="977" cy="238" r="66" fill="#f8b4c9" stroke="none"/>
<circle cx="1162" cy="275" r="66" fill="#f8b4c9" stroke="none"/>
<path d="M398.8 533.6L412.6 608.5L486.9 625.0L420.1 661.3L427.3 737.1L372.1 684.7L302.3 715.0L335.1 646.3L284.6 589.3L360.1 599.2zM389.4 586.8L396.3 624.2L433.5 632.5L400.0 650.6L403.7 688.5L376.1 662.3L341.2 677.5L357.5 643.2L332.3 614.6L370.1 619.6z" fill="#f8b4c9" fill-rule="evenodd" stroke="none"/>
<path d="M677.7 453.6L731.5 552.7L843.8 541.9L766.2 623.7L811.1 727.1L709.4 678.5L624.9 753.3L639.6 641.5L542.4 584.2L653.3 563.7zM688.9 532.8L715.8 582.3L771.9 576.9L733.1 617.8L755.6 669.5L704.7 645.3L662.4 682.6L669.8 626.7L621.2 598.1L676.7 587.8z" fill="#f8b4c9" fill-rule="evenodd" stroke="none"/>
<path d="M989.6 423.6L1027.5 488.0L1101.6 478.2L1052.1 534.2L1084.3 601.6L1015.7 571.8L961.5 623.3L968.7 548.9L903.0 513.2L976.0 497.1zM998.8 475.8L1017.8 508.0L1054.8 503.1L1030.0 531.1L1046.1 564.8L1011.9 549.9L984.8 575.6L988.3 538.5L955.5 520.6L992.0 512.5z" fill="#f8b4c9" fill-rule="evenodd" stroke="none"/>
</g>
<!--HORSE-->
<g fill="#2a2132" stroke="#f8b4c9" stroke-width="4" stroke-linejoin="round" stroke-linecap="round">
<g transform="translate(1320 620) scale(0.20387)" fill="none" stroke-width="13">
<path d="M120 270C300 130 500 80 650 150C720 190 760 230 800 270L800 880C650 840 480 760 340 640z" fill="#2a2132" stroke="none"/>
<path d="M120 270C260 150 400 105 500 110C620 115 710 180 800 265L800 345C720 250 620 160 490 150C380 150 260 210 155 295z" fill="#f8b4c9" stroke="none"/>
<path d="M320 580C420 680 560 760 800 832L800 888C600 850 440 760 335 645z" fill="#f8b4c9" stroke="none"/>
<path d="M205 335C300 250 400 225 480 235C580 250 650 340 705 420C640 370 560 300 460 290C380 285 300 330 240 385" stroke-width="13"/>
<path d="M255 400C350 385 450 410 540 500C620 590 690 680 775 725" stroke-width="17"/>
<path d="M290 465C380 470 470 510 550 600C600 670 680 730 770 745" stroke-width="17"/>
</g>
<path d="M1003 676C996 720 1000 770 1010.500 794C990 810 976 830 980 845C984 870 1000 895 1020 908C1035 918 1050 927 1062 934L1062 945H1101L1099.400 932.500C1085 912 1068 890 1070 870C1072 852 1085 843 1099 846C1130 853 1180 870 1215 871C1250 870 1280 855 1303 841L1327 885C1350 895 1390 908 1415 914C1430 920 1448 912 1447 900C1447 890 1437 884 1426 882C1410 870 1398 845 1395 820C1393 780 1392 750 1382 725C1372 700 1350 678 1329 671C1315 668 1300 670 1293 673L1129 679L1110 647z"/>
<path d="M1010.500 794L1030.600 818.700C1015 826 1004 840 1000 860C998 880 1006 895 1018 906" fill="none"/>
<path d="M1263 862C1290 880 1330 890 1360 897C1385 903 1400 908 1415 914M1426 882L1415 912" fill="none"/>
</g>
<g transform="translate(860 430) scale(0.26504)" fill="none" stroke="#f8b4c9" stroke-width="14.500" stroke-linejoin="round" stroke-linecap="round">
<path d="M862 335C900 420 930 520 935 640C940 760 950 860 1010 930L1250 930L1250 700C1100 640 960 450 905 300z" fill="#2a2132" stroke="none"/>
<path d="M340 390C250 440 150 540 100 610C60 670 70 760 110 800C170 850 280 885 420 900L560 910L700 990L960 900L935 640C930 520 900 420 862 335L628 188z" fill="#2a2132" stroke="none"/>
<path d="M120 272C180 275 250 280 300 215C340 160 400 100 480 95C540 95 590 140 625 190L510 308C460 325 400 350 340 390z" fill="#2a2132"/>
<path d="M440 93C520 75 595 125 636 184L572 222C545 160 505 118 440 93z" fill="#f8b4c9"/>
<path d="M628 188C650 100 720 50 790 55C870 65 930 130 915 230C905 280 885 310 862 335" fill="#2a2132"/>
<path d="M790 55C850 80 890 140 880 215C870 260 850 290 828 310L862 335C900 290 925 230 915 170C900 100 850 60 790 55z" fill="#f8b4c9"/>
<path d="M340 390C250 440 150 540 100 610C60 670 70 760 110 800C170 850 280 885 420 900L560 910"/>
<path d="M340 390C400 350 460 325 510 308"/>
<path d="M235 455C320 440 400 500 430 610M350 395C430 430 500 520 520 700"/>
<path d="M570 725C700 690 810 590 860 470C880 420 870 370 830 335M520 812C700 770 850 680 910 570C925 530 925 480 905 420"/>
<path d="M520 572C545 612 620 615 682 560C650 640 545 655 520 572z" fill="#2a2132" stroke-width="11"/>
<path d="M150 640C170 625 200 630 215 650C200 680 170 700 150 705C140 690 140 660 150 640z" stroke-width="10"/>
<circle cx="655" cy="340" r="145" fill="#2a2132" stroke-width="14"/>
<path d="M655 340Q732 293 800 340M655 340Q744 331 786 403M655 340Q740 371 745 453M655 340Q718 404 687 481M655 340Q684 425 623 481M655 340Q644 429 565 453M655 340Q606 416 524 403M655 340Q578 387 510 340M655 340Q566 349 524 277M655 340Q570 309 565 227M655 340Q592 276 623 199M655 340Q626 255 687 199M655 340Q666 251 745 227M655 340Q704 264 786 277" stroke-width="12"/>
<path d="M365 840L340 893M470 850L440 900" stroke-width="10"/>
<path d="M427.7 615.2L470.9 699.6L565.7 704.8L498.8 772.1L523.1 863.8L438.5 820.9L358.8 872.4L373.4 778.7L299.8 718.8L393.5 703.7z" fill="#f8b4c9" stroke-width="8"/>
<path d="M430.2 668.1L457.9 724.8L520.9 727.0L475.6 770.9L492.9 831.5L437.2 801.9L384.9 837.2L395.8 775.1L346.1 736.2L408.6 727.4z" fill="#2a2132" stroke="none"/>
</g>
<g transform="translate(1060 560) scale(0.26504)" fill="none" stroke="#f8b4c9" stroke-width="12" stroke-linejoin="round" stroke-linecap="round">
<circle cx="200" cy="518" r="65" fill="#f8b4c9" stroke="none"/>
<circle cx="200" cy="518" r="41" fill="none" stroke="#2a2132" stroke-width="5"/>
<path d="M204.7 491.4L208.6 509.7L226.7 514.2L210.6 523.6L211.8 542.3L197.9 529.8L180.6 536.8L188.1 519.7L176.2 505.3L194.7 507.2z" fill="#2a2132" stroke="none"/>
<circle cx="167" cy="670" r="65" fill="#f8b4c9" stroke="none"/>
<circle cx="167" cy="670" r="41" fill="none" stroke="#2a2132" stroke-width="5"/>
<path d="M171.7 643.4L175.6 661.7L193.7 666.2L177.6 675.6L178.8 694.3L164.9 681.8L147.6 688.8L155.1 671.7L143.2 657.3L161.7 659.2z" fill="#2a2132" stroke="none"/>
<circle cx="192" cy="825" r="65" fill="#f8b4c9" stroke="none"/>
<circle cx="192" cy="825" r="41" fill="none" stroke="#2a2132" stroke-width="5"/>
<path d="M196.7 798.4L200.6 816.7L218.7 821.2L202.6 830.6L203.8 849.3L189.9 836.8L172.6 843.8L180.1 826.7L168.2 812.3L186.7 814.2z" fill="#2a2132" stroke="none"/>
<circle cx="325" cy="952" r="65" fill="#f8b4c9" stroke="none"/>
<circle cx="325" cy="952" r="41" fill="none" stroke="#2a2132" stroke-width="5"/>
<path d="M329.7 925.4L333.6 943.7L351.7 948.2L335.6 957.6L336.8 976.3L322.9 963.8L305.6 970.8L313.1 953.7L301.2 939.3L319.7 941.2z" fill="#2a2132" stroke="none"/>
<circle cx="492" cy="988" r="65" fill="#f8b4c9" stroke="none"/>
<circle cx="492" cy="988" r="41" fill="none" stroke="#2a2132" stroke-width="5"/>
<path d="M496.7 961.4L500.6 979.7L518.7 984.2L502.6 993.6L503.8 1012.3L489.9 999.8L472.6 1006.8L480.1 989.7L468.2 975.3L486.7 977.2z" fill="#2a2132" stroke="none"/>
<circle cx="685" cy="943" r="65" fill="#f8b4c9" stroke="none"/>
<circle cx="685" cy="943" r="41" fill="none" stroke="#2a2132" stroke-width="5"/>
<path d="M689.7 916.4L693.6 934.7L711.7 939.2L695.6 948.6L696.8 967.3L682.9 954.8L665.6 961.8L673.1 944.7L661.2 930.3L679.7 932.2z" fill="#2a2132" stroke="none"/>
<circle cx="823" cy="845" r="65" fill="#f8b4c9" stroke="none"/>
<circle cx="823" cy="845" r="41" fill="none" stroke="#2a2132" stroke-width="5"/>
<path d="M827.7 818.4L831.6 836.7L849.7 841.2L833.6 850.6L834.8 869.3L820.9 856.8L803.6 863.8L811.1 846.7L799.2 832.3L817.7 834.2z" fill="#2a2132" stroke="none"/>
<circle cx="843" cy="685" r="65" fill="#f8b4c9" stroke="none"/>
<circle cx="843" cy="685" r="41" fill="none" stroke="#2a2132" stroke-width="5"/>
<path d="M847.7 658.4L851.6 676.7L869.7 681.2L853.6 690.6L854.8 709.3L840.9 696.8L823.6 703.8L831.1 686.7L819.2 672.3L837.7 674.2z" fill="#2a2132" stroke="none"/>
<circle cx="800" cy="518" r="65" fill="#f8b4c9" stroke="none"/>
<circle cx="800" cy="518" r="41" fill="none" stroke="#2a2132" stroke-width="5"/>
<path d="M804.7 491.4L808.6 509.7L826.7 514.2L810.6 523.6L811.8 542.3L797.9 529.8L780.6 536.8L788.1 519.7L776.2 505.3L794.7 507.2z" fill="#2a2132" stroke="none"/>
<path d="M262 465C200 560 170 680 215 790C270 890 380 945 500 945C620 945 740 890 790 790C840 680 800 560 745 465C600 505 400 505 262 465z" fill="#2a2132" stroke-width="10"/>
<path d="M300 480C245 570 220 680 255 775C300 860 390 910 500 912C610 910 705 860 750 775C790 680 765 570 715 480" stroke-width="9"/>
<circle cx="320" cy="515" r="24" stroke-width="9"/>
<circle cx="278" cy="598" r="24" stroke-width="9"/>
<circle cx="268" cy="692" r="24" stroke-width="9"/>
<circle cx="305" cy="788" r="24" stroke-width="9"/>
<circle cx="385" cy="858" r="24" stroke-width="9"/>
<circle cx="492" cy="885" r="24" stroke-width="9"/>
<circle cx="610" cy="868" r="24" stroke-width="9"/>
<circle cx="698" cy="805" r="24" stroke-width="9"/>
<circle cx="740" cy="715" r="24" stroke-width="9"/>
<circle cx="728" cy="600" r="24" stroke-width="9"/>
<circle cx="688" cy="505" r="24" stroke-width="9"/>
<path d="M503 520L650 770H358zM503 855L358 600H650z" stroke-width="11" stroke-linejoin="miter"/>
<path d="M503 600L578 643V730L503 773L428 730V643z" stroke-width="3"/>
<clipPath id="bandclip"><path d="M150 -190C180 -100 230 30 295 110C340 170 400 230 470 265C600 320 800 330 1060 285L1010 410C940 395 860 405 780 425C700 450 640 480 530 490C400 500 270 470 210 400C190 330 190 200 180 100C175 20 150 -80 107 -155z"/></clipPath>
<path d="M150 -190C180 -100 230 30 295 110C340 170 400 230 470 265C600 320 800 330 1060 285L1010 410C940 395 860 405 780 425C700 450 640 480 530 490C400 500 270 470 210 400C190 330 190 200 180 100C175 20 150 -80 107 -155z" fill="#2a2132" stroke-width="12"/>
<path d="M100 -95L175 -170M110 -30L200 -110M130 35L225 -45M150 100L250 20M160 165L285 65M165 235L320 115M175 305L355 150M195 385L395 195M240 450L440 230M330 500L490 255M420 510L545 280M505 510L615 295M610 500L690 305M715 465L770 310M810 430L850 305M895 410L915 300M960 420L985 285" stroke-width="11" clip-path="url(#bandclip)"/>
</g>
<g transform="translate(860 430) scale(0.26504)" fill="none" stroke="#f8b4c9" stroke-linejoin="round" stroke-linecap="round">
<path d="M896.7 631.3L929.4 682.4L989.7 676.7L951.2 723.5L975.3 779.1L918.9 757.0L873.4 797.1L877.0 736.6L824.9 705.8L883.5 690.5z" fill="#f8b4c9" stroke="#f8b4c9" stroke-width="4" stroke-linejoin="round"/>
<path d="M903.1 667.7L922.0 697.4L957.1 694.0L934.7 721.2L948.7 753.5L916.0 740.5L889.6 763.9L891.8 728.7L861.5 710.9L895.5 702.1z" fill="#2a2132" stroke="none"/>
<path d="M815.3 765.1L823.5 826.5L881.9 847.3L826.0 874.1L824.3 936.0L781.5 891.1L722.1 908.6L751.6 854.1L716.5 803.0L777.5 814.2z" fill="#f8b4c9" stroke="#f8b4c9" stroke-width="4" stroke-linejoin="round"/>
<path d="M805.5 801.6L810.2 837.3L844.1 849.3L811.6 864.7L810.7 900.7L785.9 874.6L751.4 884.9L768.6 853.2L748.2 823.6L783.6 830.2z" fill="#2a2132" stroke="none"/>
<path d="M637.3 823.3L650.5 882.5L709.1 897.8L657.0 928.6L660.6 989.1L615.1 949.0L558.7 971.1L582.8 915.5L544.3 868.7L604.6 874.4z" fill="#f8b4c9" stroke="#f8b4c9" stroke-width="4" stroke-linejoin="round"/>
<path d="M630.9 859.7L638.5 894.1L672.5 902.9L642.2 920.7L644.4 955.9L618.0 932.5L585.3 945.5L599.3 913.2L576.9 886.0L612.0 889.4z" fill="#2a2132" stroke="none"/>
</g>
<!--/HORSE-->
</g>
<circle cx="833" cy="373" r="4.500" fill="#1677ff" stroke="#fff" stroke-width="1"/>
<circle cx="754.500" cy="527" r="4.800" fill="#fff" stroke="#1677ff" stroke-width="1.300"/><rect x="752" y="524.500" width="5" height="5" fill="#1677ff"/>
<circle cx="1455" cy="581" r="4.500" fill="#fff" stroke="#8b1a1a" stroke-width="1.300"/><circle cx="1455" cy="581" r="2" fill="#d02020"/>
<path d="M1122 327l4 4l-4 4l-4 -4z" fill="#f6f080" stroke="#8a8a50" stroke-width=".6"/>
<circle cx="525.500" cy="581.500" r="3.600" fill="#fff" stroke="#4a90e2" stroke-width="1"/>
<circle cx="990.500" cy="897.500" r="3.600" fill="#fff" stroke="#4a90e2" stroke-width="1"/>
<circle cx="1447" cy="259" r="6.500" fill="#8e8a93"/><path d="M1442.500 256.500h9l-4.500 5.500z" fill="#2a2031"/>
</svg>
<div class="abs" style="left:-18px;top:791.500px;width:1357px;height:5px;background:#fff"></div>
<div class="abs" style="left:152px;top:794px;width:1187px;height:4px;background:#c6c6ca;border-radius:3px 0 0 0"></div>
</div>
<!--OVERLAY-->
<div id="tb" class="abs" style="left:813px;top:220.500px;width:583.500px;height:79px;background:#fff;border-radius:8px;box-shadow:0 1px 4px rgba(0,0,0,.12)">
<svg class="ico" style="left:21px;top:15.5px" width="20" height="16" viewBox="0 0 20 16"><defs><linearGradient id="ai1" x1="0" y1="1" x2="1" y2="0"><stop offset="0" stop-color="#2bb8ff"/><stop offset="1" stop-color="#3a6bff"/></linearGradient><linearGradient id="ai2" x1="0" y1="0" x2="1" y2="1"><stop offset="0" stop-color="#ff4fc0"/><stop offset="1" stop-color="#ffb199"/></linearGradient></defs><path d="M0 15L5.500 1H11L5.500 15z" fill="url(#ai1)"/><path d="M8 1H11.500L15.500 15H12z" fill="#2535cc"/><path d="M14 1H19L13.500 15H12.300L11.500 11z" fill="url(#ai2)"/></svg>
<div class="t c" style="left:30.5px;top:42.5px;font-size:11.500px;color:#222">Edraw AI</div>
<div class="sep" style="left:62.5px;top:7.5px;height:63px;background:#ececf0"></div>
<div class="sep" style="left:315.5px;top:7.5px;height:63px;background:#ececf0"></div>
<div class="sep" style="left:376.5px;top:7.5px;height:63px;background:#ececf0"></div>
<div class="sep" style="left:515.5px;top:7.5px;height:63px;background:#ececf0"></div>
<div class="abs" style="left:73.5px;top:8.0px;width:88.500px;height:23px;border:1px solid #e6e6ea;border-radius:5px"></div>
<svg class="ico" style="left:80px;top:12.5px" width="14" height="14" viewBox="0 0 14 14"><circle cx="6" cy="6" r="5" fill="none" stroke="#b8b8bd" stroke-width="1.300"/><path d="M9.700 9.700L13 13" stroke="#b8b8bd" stroke-width="1.300" stroke-linecap="round"/></svg>
<div class="abs" style="left:99px;top:11.5px;width:48.500px;height:18px;overflow:hidden"><div class="t" style="left:0;top:1px;font-size:14px;color:#222">Comic Sans</div></div>
<div class="dd" style="left:150.5px;top:17.5px;border-width:4px 3.500px 0 3.500px;border-top-color:#555"></div>
<div class="abs" style="left:169.5px;top:8.0px;width:47px;height:23px;border:1px solid #e6e6ea;border-radius:5px"></div>
<div class="t" style="left:176.5px;top:12.5px;font-size:14px;color:#222">20</div>
<div class="dd" style="left:204px;top:17.5px;border-width:4px 3.500px 0 3.500px;border-top-color:#555"></div>
<svg class="ico" style="left:226px;top:11.5px" width="18" height="16" viewBox="0 0 18 16"><path d="M1 15L6.500 1.500L12 15M3 10.500h7" fill="none" stroke="#2b2b2f" stroke-width="1.5" stroke-linecap="round" stroke-linejoin="round" stroke-width="1.600"/><path d="M14.800 .8v5M12.300 3.300h5" fill="none" stroke="#2b2b2f" stroke-width="1.5" stroke-linecap="round" stroke-linejoin="round" stroke-width="1.300"/></svg>
<svg class="ico" style="left:256px;top:11.5px" width="18" height="16" viewBox="0 0 18 16"><path d="M1 15L6.500 1.500L12 15M3 10.500h7" fill="none" stroke="#2b2b2f" stroke-width="1.5" stroke-linecap="round" stroke-linejoin="round" stroke-width="1.600"/><path d="M12.500 3.300h4.500" fill="none" stroke="#2b2b2f" stroke-width="1.5" stroke-linecap="round" stroke-linejoin="round" stroke-width="1.300"/></svg>
<svg class="ico" style="left:288px;top:12.5px" width="14" height="14" viewBox="0 0 14 14"><path d="M.5 1h10M.5 5h13M.5 9h10M.5 13h13" fill="none" stroke="#2b2b2f" stroke-width="1.5" stroke-linecap="round" stroke-linejoin="round" stroke-width="1.500" stroke-linecap="butt"/></svg>
<div class="t" style="left:79px;top:37.5px;font-size:16.500px;line-height:20px;font-weight:700;color:#2b2b2f">B</div>
<svg class="ico" style="left:109px;top:39.5px" width="12" height="15" viewBox="0 0 12 15"><path d="M4.500 1.200h6M1 13.800h6M7.800 1.200L3.800 13.800" fill="none" stroke="#2b2b2f" stroke-width="1.5" stroke-linecap="round" stroke-linejoin="round" stroke-width="1.800" stroke-linecap="butt"/></svg>
<svg class="ico" style="left:139px;top:39.5px" width="12" height="16" viewBox="0 0 12 16"><path d="M2 .8v6.500a4 4 0 0 0 8 0V.8" fill="none" stroke="#2b2b2f" stroke-width="1.5" stroke-linecap="round" stroke-linejoin="round" stroke-width="1.600"/><path d="M.5 15h11" fill="none" stroke="#2b2b2f" stroke-width="1.5" stroke-linecap="round" stroke-linejoin="round" stroke-width="1.400" stroke-linecap="butt"/></svg>
<svg class="ico" style="left:166px;top:39.5px" width="16" height="15" viewBox="0 0 16 15"><path d="M11.500 4C11 2 9.700 1 8 1C6 1 4.500 2.200 4.500 4C4.500 5.500 5.500 6.300 7 6.800M9.500 9.200C10.800 9.800 11.700 10.500 11.700 11.800C11.700 13.200 10.200 14.200 8 14.200C6 14.200 4.500 13.200 4.200 11.500" fill="none" stroke="#2b2b2f" stroke-width="1.5" stroke-linecap="round" stroke-linejoin="round" stroke-width="1.500"/><path d="M.5 7.800h15" fill="none" stroke="#2b2b2f" stroke-width="1.5" stroke-linecap="round" stroke-linejoin="round" stroke-width="1.300" stroke-linecap="butt"/></svg>
<svg class="ico" style="left:195px;top:39.5px" width="19" height="15" viewBox="0 0 19 15"><path d="M3 1.500v12M.8 3.800L3 1.300L5.200 3.800M.8 11.200L3 13.700L5.200 11.200" fill="none" stroke="#2b2b2f" stroke-width="1.5" stroke-linecap="round" stroke-linejoin="round" stroke-width="1.300"/><path d="M8 2h10.500M8 7.500h10.500M8 13h10.500" fill="none" stroke="#2b2b2f" stroke-width="1.5" stroke-linecap="round" stroke-linejoin="round" stroke-width="1.700" stroke-linecap="butt"/></svg>
<svg class="ico" style="left:226px;top:40.5px" width="18" height="13" viewBox="0 0 18 13"><path d="M5 1.200h12.500M5 6.500h12.500M5 11.800h12.500" fill="none" stroke="#2b2b2f" stroke-width="1.5" stroke-linecap="round" stroke-linejoin="round" stroke-width="1.700" stroke-linecap="butt"/><circle cx="1.500" cy="1.200" r="1.200" fill="#2b2b2f"/><circle cx="1.500" cy="6.500" r="1.200" fill="#2b2b2f"/><circle cx="1.500" cy="11.800" r="1.200" fill="#2b2b2f"/></svg>
<div class="t" style="left:256.5px;top:36.5px;font-size:15px;line-height:18px;color:#a9a9ae">ab</div>
<div class="abs" style="left:256.5px;top:54.0px;width:17px;height:1.500px;background:#b9b9be"></div>
<svg class="ico" style="left:287px;top:37.5px" width="16" height="14" viewBox="0 0 16 14"><path d="M2 13.500L8 .8L14 13.500M4 9.300h8" fill="none" stroke="#2b2b2f" stroke-width="1.5" stroke-linecap="round" stroke-linejoin="round" stroke-width="1.500"/></svg>
<div class="abs" style="left:287px;top:54.0px;width:17px;height:2px;background:#e8709c"></div>
<svg class="ico" style="left:337px;top:15.0px" width="18" height="18" viewBox="0 0 18 18"><path d="M1.300 8.600L8.200 3L16.300 8.600L9.200 16z" fill="none" stroke="#2b2b2f" stroke-width="1.5" stroke-linecap="round" stroke-linejoin="round" stroke-width="2.100"/><path d="M11.300 5.200L15.600 1.800" stroke="#2b2b2f" stroke-width="3.600" stroke-linecap="round"/></svg>
<div class="t c" style="left:345.70000000000005px;top:41.5px;font-size:11.600px;line-height:16px;color:#222">Copiar<br>Formato</div>
<svg class="ico" style="left:392.5px;top:13.0px" width="21" height="20" viewBox="0 0 21 20"><path d="M11 2H3.500A1.500 1.500 0 0 0 2 3.500V10M10 18h6.500a1.500 1.500 0 0 0 1.500-1.500V13M2 14.500v2A1.500 1.500 0 0 0 3.500 18H6" fill="none" stroke="#2b2b2f" stroke-width="1.5" stroke-linecap="round" stroke-linejoin="round" stroke-width="1.700" stroke-linecap="butt"/><path d="M17 4L10 12.500" stroke="#2b2b2f" stroke-width="3.300" stroke-linecap="round"/><path d="M8.800 12.300C7 12.300 5.800 13.500 5.800 15C5.800 16 5 16.500 4.300 16.500C6.800 17.800 10 16.800 10.300 14z" fill="#2b2b2f"/></svg>
<div class="t c" style="left:403.5px;top:42.5px;font-size:11.300px;color:#222">Estilos</div>
<svg class="ico" style="left:438px;top:12.5px" width="19" height="19" viewBox="0 0 19 19"><g transform="rotate(-38 9 9)" fill="none" stroke="#b5b5ba" stroke-width="1.400" stroke-linejoin="round"><path d="M3.500 6h11v7a2 2 0 0 1-2 2h-7a2 2 0 0 1-2-2z"/><path d="M6 6V3.500a3 3 0 0 1 6 0V6" stroke-dasharray="2.500 1.500"/></g><path d="M16.500 12.500c.8 1 1.200 1.700 1.200 2.200a1.200 1.200 0 0 1-2.400 0c0-.5.400-1.200 1.200-2.200z" fill="#b5b5ba"/></svg>
<div class="abs" style="left:439px;top:30.19999999999999px;width:17px;height:2px;background:#ffe3a6"></div>
<div class="t c" style="left:447.5px;top:42.5px;font-size:11.300px;color:#b3b3b8">Relleno</div>
<svg class="ico" style="left:481px;top:15.0px" width="18" height="18" viewBox="0 0 18 18"><path d="M15.500 1.500L8 10" stroke="#2b2b2f" stroke-width="3.200" stroke-linecap="round"/><path d="M6.800 9.800C5 9.800 3.800 11 3.800 12.600C3.800 13.500 3 14 2.300 14C4.800 15.300 8 14.300 8.300 11.500z" fill="#2b2b2f"/></svg>
<div class="abs" style="left:482.5px;top:30.30000000000001px;width:17px;height:2px;background:#1a1a1e"></div>
<div class="t c" style="left:491px;top:42.5px;font-size:11.500px;color:#222">Línea</div>
<svg class="ico" style="left:531.5px;top:13.0px" width="21" height="21" viewBox="0 0 21 21"><circle cx="10.500" cy="10.500" r="9.300" fill="none" stroke="#2b2b2f" stroke-width="1.5" stroke-linecap="round" stroke-linejoin="round" stroke-width="1.900"/><circle cx="10.500" cy="6" r="1.300" fill="#2b2b2f"/><circle cx="10.500" cy="10.500" r="1.300" fill="#2b2b2f"/><circle cx="10.500" cy="15" r="1.300" fill="#2b2b2f"/></svg>
<div class="t c" style="left:542px;top:42.5px;font-size:11.500px;color:#222">Más</div>
<svg class="ico" style="left:566px;top:6.5px" width="11" height="11" viewBox="0 0 11 11"><path d="M6.500 .8L10.200 4.500L8.800 5L6.800 7.800L6.500 9.500L1.500 4.500L3.200 4.200L6 2.200zM4 7L.8 10.200" fill="none" stroke="#9a9aa0" stroke-width="1" stroke-linejoin="round" stroke-linecap="round"/></svg>
<svg class="ico" style="left:567px;top:63.5px" width="9" height="9" viewBox="0 0 9 9"><path d="M.5 3.500h3V.5M8.500 5.500h-3v3" fill="none" stroke="#8a8a90" stroke-width="1"/></svg>
</div>
<div class="abs" style="left:792px;top:198px;width:628px;height:144px;border:4px solid #ed1c24;border-radius:2px"></div>
<svg class="ico" style="left:0;top:0" width="1577" height="981" viewBox="0 0 1577 981"><path d="M692.200 213.300L763.700 245.100L762.400 238.400L774.300 252.800L755 252.800L759.400 249z" fill="#ed1c24"/></svg>
</body>
</html>
